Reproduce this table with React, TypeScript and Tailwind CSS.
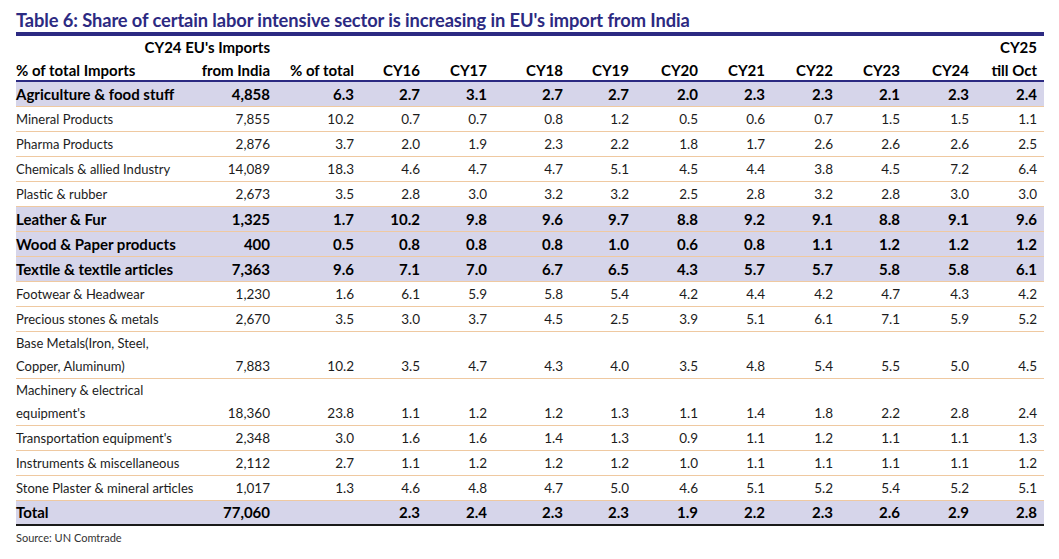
import React from "react";

type Row = { label: string[]; bold?: boolean; values: string[] };

const rows: Row[] = [
  { label: ["Agriculture & food stuff"], bold: true, values: ["4,858", "6.3", "2.7", "3.1", "2.7", "2.7", "2.0", "2.3", "2.3", "2.1", "2.3", "2.4"] },
  { label: ["Mineral Products"], values: ["7,855", "10.2", "0.7", "0.7", "0.8", "1.2", "0.5", "0.6", "0.7", "1.5", "1.5", "1.1"] },
  { label: ["Pharma Products"], values: ["2,876", "3.7", "2.0", "1.9", "2.3", "2.2", "1.8", "1.7", "2.6", "2.6", "2.6", "2.5"] },
  { label: ["Chemicals & allied Industry"], values: ["14,089", "18.3", "4.6", "4.7", "4.7", "5.1", "4.5", "4.4", "3.8", "4.5", "7.2", "6.4"] },
  { label: ["Plastic & rubber"], values: ["2,673", "3.5", "2.8", "3.0", "3.2", "3.2", "2.5", "2.8", "3.2", "2.8", "3.0", "3.0"] },
  { label: ["Leather & Fur"], bold: true, values: ["1,325", "1.7", "10.2", "9.8", "9.6", "9.7", "8.8", "9.2", "9.1", "8.8", "9.1", "9.6"] },
  { label: ["Wood & Paper products"], bold: true, values: ["400", "0.5", "0.8", "0.8", "0.8", "1.0", "0.6", "0.8", "1.1", "1.2", "1.2", "1.2"] },
  { label: ["Textile & textile articles"], bold: true, values: ["7,363", "9.6", "7.1", "7.0", "6.7", "6.5", "4.3", "5.7", "5.7", "5.8", "5.8", "6.1"] },
  { label: ["Footwear & Headwear"], values: ["1,230", "1.6", "6.1", "5.9", "5.8", "5.4", "4.2", "4.4", "4.2", "4.7", "4.3", "4.2"] },
  { label: ["Precious stones & metals"], values: ["2,670", "3.5", "3.0", "3.7", "4.5", "2.5", "3.9", "5.1", "6.1", "7.1", "5.9", "5.2"] },
  { label: ["Base Metals(Iron, Steel,", "Copper, Aluminum)"], values: ["7,883", "10.2", "3.5", "4.7", "4.3", "4.0", "3.5", "4.8", "5.4", "5.5", "5.0", "4.5"] },
  { label: ["Machinery & electrical", "equipment's"], values: ["18,360", "23.8", "1.1", "1.2", "1.2", "1.3", "1.1", "1.4", "1.8", "2.2", "2.8", "2.4"] },
  { label: ["Transportation equipment's"], values: ["2,348", "3.0", "1.6", "1.6", "1.4", "1.3", "0.9", "1.1", "1.2", "1.1", "1.1", "1.3"] },
  { label: ["Instruments & miscellaneous"], values: ["2,112", "2.7", "1.1", "1.2", "1.2", "1.2", "1.0", "1.1", "1.1", "1.1", "1.1", "1.2"] },
  { label: ["Stone Plaster & mineral articles"], values: ["1,017", "1.3", "4.6", "4.8", "4.7", "5.0", "4.6", "5.1", "5.2", "5.4", "5.2", "5.1"] },
];

const total = ["77,060", "", "2.3", "2.4", "2.3", "2.3", "1.9", "2.2", "2.3", "2.6", "2.9", "2.8"];
const years = ["CY16", "CY17", "CY18", "CY19", "CY20", "CY21", "CY22", "CY23", "CY24"];

// column widths measured off the source table, right-aligned numbers
const cols =
  "grid grid-cols-[184px_77px_84px_66px_67px_76px_66px_69px_67px_68px_67px_69px_68px]";

function DataRow({ row }: { row: Row }) {
  const tall = row.label.length > 1;
  return (
    <div
      className={`${cols} items-end border-b border-[#efc9a1] ${tall ? "h-[47px]" : "h-[25px]"} ${
        row.bold ? "bg-[#d6d5ea] font-bold text-[15px] text-black" : "text-[13px] text-[#1c1c1c]"
      }`}
    >
      <div className="flex flex-col leading-[23px] whitespace-nowrap">
        {row.label.map((l) => (
          <span key={l}>{l}</span>
        ))}
      </div>
      {row.values.map((v, i) => (
        <div key={i} className={`pr-[7px] text-right leading-[23px] ${row.bold ? "" : "text-[13.5px]"}`}>
          {v}
        </div>
      ))}
    </div>
  );
}

export default function App() {
  return (
    <div className="h-[559px] w-[1059px] bg-white pl-4 pt-[9px] font-['Lato',sans-serif]">
      <div className="w-[1028px]">
        <h1 className="border-b-4 border-[#2c2a82] pb-[1px] text-[18.3px] font-bold leading-[22px] tracking-[-0.1px] text-[#2c2a82]">
          Table 6: Share of certain labor intensive sector is increasing in EU's import from India
        </h1>

        <div className={`${cols} h-[46px] items-end border-b-2 border-[#2c2a82] text-[15px] font-bold leading-[23px] text-black`}>
          <div>% of total Imports</div>
          <div className="flex flex-col items-end pr-[7px] whitespace-nowrap">
            <span>CY24 EU's Imports</span>
            <span>from India</span>
          </div>
          <div className="pr-[7px] text-right">% of total</div>
          {years.map((y) => (
            <div key={y} className="pr-[7px] text-right">
              {y}
            </div>
          ))}
          <div className="pr-[7px] text-right">
            <div>CY25</div>
            <div>till Oct</div>
          </div>
        </div>

        {rows.map((r) => (
          <DataRow key={r.label.join(" ")} row={r} />
        ))}

        <div className={`${cols} h-[25px] items-end border-b-2 border-[#1a1a1a] bg-[#d6d5ea] text-[15px] font-bold leading-[23px] text-black`}>
          <div>Total</div>
          {total.map((v, i) => (
            <div key={i} className="pr-[7px] text-right">
              {v}
            </div>
          ))}
        </div>

        <p className="pt-[4px] text-[11px] text-[#333]">Source: UN Comtrade</p>
      </div>
    </div>
  );
}
